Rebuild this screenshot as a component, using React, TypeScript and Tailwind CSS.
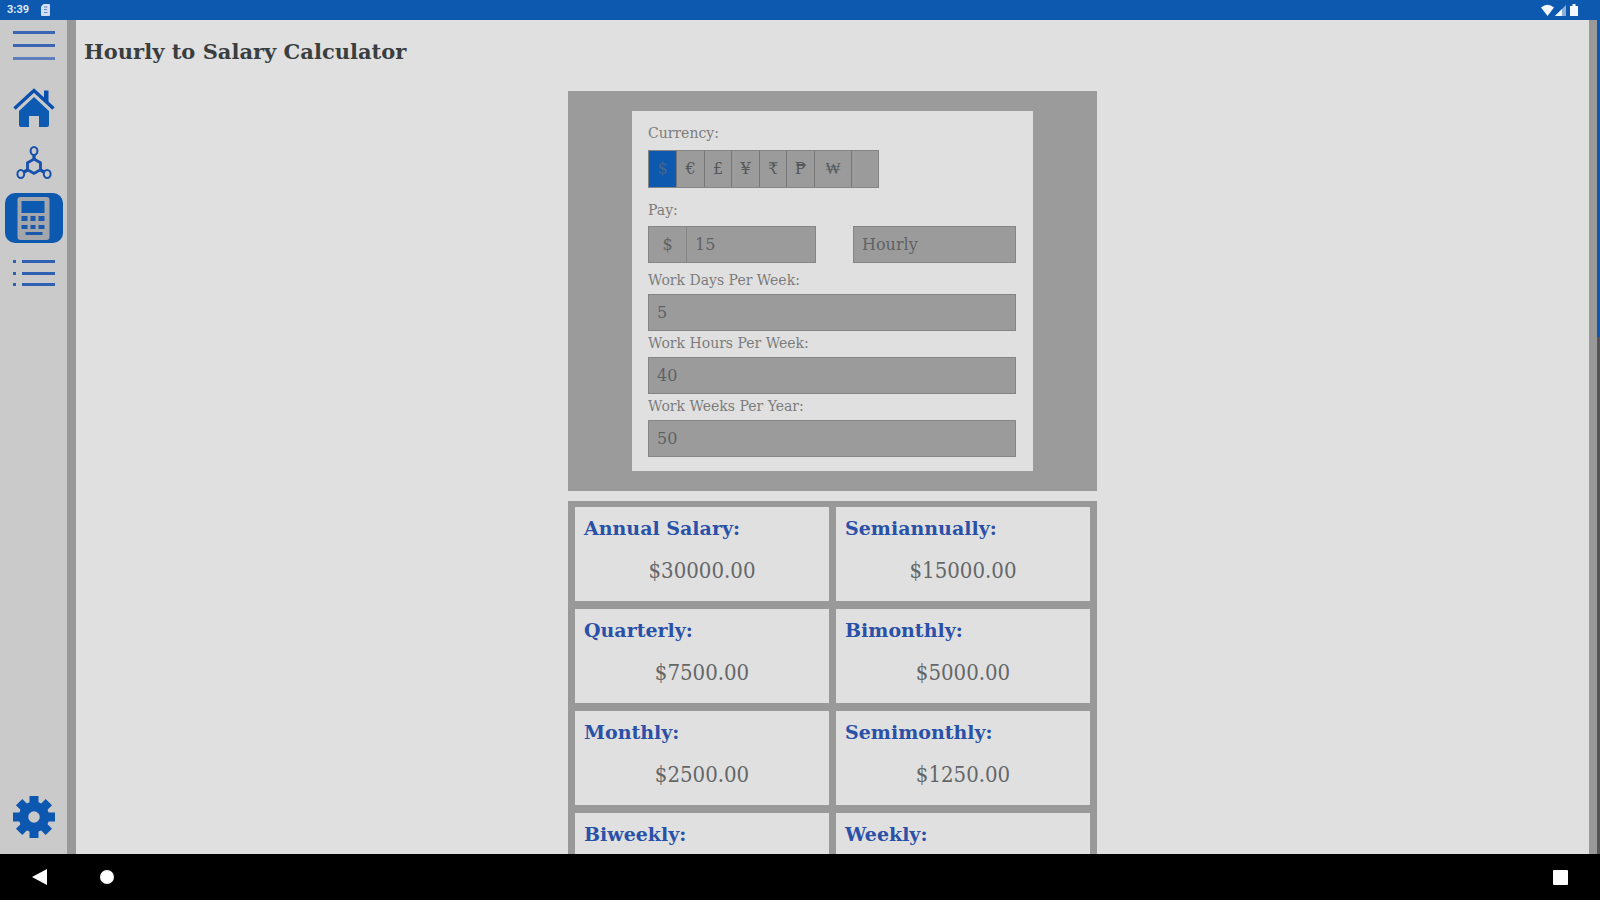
import { useState } from "react";
import type { ReactNode } from "react";

const currencies = ["$", "€", "£", "¥", "₹", "₱", "₩", ""];

const results = [
  { name: "Annual Salary:", amount: "30000.00" },
  { name: "Semiannually:", amount: "15000.00" },
  { name: "Quarterly:", amount: "7500.00" },
  { name: "Bimonthly:", amount: "5000.00" },
  { name: "Monthly:", amount: "2500.00" },
  { name: "Semimonthly:", amount: "1250.00" },
  { name: "Biweekly:" },
  { name: "Weekly:" },
];

function StatusBar() {
  return (
    <header className="flex h-5 shrink-0 items-center justify-between bg-[#0c59af] pl-[7px] pr-[21px] font-['Roboto',sans-serif] text-[11px] font-bold text-[#dfe6f5]">
      <div className="flex items-center gap-3">
        <span>3:39</span>
        <svg width="9" height="12" viewBox="0 0 9 12" aria-hidden="true">
          <path d="M2.500 0H8a1 1 0 0 1 1 1v10a1 1 0 0 1-1 1H1a1 1 0 0 1-1-1V2.500z" fill="#d3def2" />
          <path d="M3 3h3.500M3 5.500h3M3 8.500h3.500" stroke="#5d8bcb" strokeWidth="1.200" />
        </svg>
      </div>
      <svg width="38" height="13" viewBox="0 0 38 13" aria-hidden="true" fill="#f4f7fd">
        <path d="M0 3.500Q6.500-2 13 3.500L6.500 12z" />
        <path d="M14 12L25 1v11z" opacity=".55" />
        <path d="M14 12l7-7v7z" />
        <path d="M29 2h2.500V0h3v2H37v10h-8z" />
      </svg>
    </header>
  );
}

function HomeIcon() {
  return (
    <svg width="42" height="40" viewBox="0 0 42 40" aria-hidden="true">
      <path d="M1.500 20.500L21 2.500l19.500 18" fill="none" stroke="#0b4fae" strokeWidth="3.400" />
      <path d="M31 2.500h4.500V15L31 11z" fill="#0b4fae" />
      <path d="M21 9L6 23v14q0 2 2 2h8V28h10v11h8q2 0 2-2V23z" fill="#0c5ab2" />
    </svg>
  );
}

function MoleculeIcon() {
  return (
    <svg width="36" height="34" viewBox="0 0 36 34" aria-hidden="true" fill="none" stroke="#1650ad">
      <path d="M18 13l6.500 3.800v7L18 27.500l-6.500-3.700v-7z" strokeWidth="2.800" />
      <path d="M18 13V9M24.500 24l3.500 2M11.500 24L8 26" strokeWidth="3.200" />
      <ellipse cx="18" cy="5" rx="3.400" ry="4" strokeWidth="2" />
      <ellipse cx="4.800" cy="28" rx="3.400" ry="4" strokeWidth="2" />
      <ellipse cx="31.200" cy="28" rx="3.400" ry="4" strokeWidth="2" />
    </svg>
  );
}

function CalculatorIcon() {
  return (
    <svg width="33" height="43" viewBox="0 0 32 43" aria-hidden="true">
      <rect x="0" y="0" width="32" height="43" rx="3" fill="#a3a6ab" />
      <rect x="4" y="4" width="23" height="12" fill="#0c5ab2" />
      <g fill="#1a58ad">
        <rect x="4" y="19" width="6" height="5" />
        <rect x="13" y="19" width="5" height="5" />
        <rect x="21" y="19" width="6" height="5" />
        <rect x="4" y="28" width="6" height="4" />
        <rect x="13" y="28" width="5" height="4" />
        <rect x="21" y="28" width="6" height="4" />
        <rect x="8" y="35" width="17" height="3" />
      </g>
    </svg>
  );
}

function GearIcon() {
  const teeth = [0, 45, 90, 135, 180, 225, 270, 315];
  return (
    <svg width="42" height="42" viewBox="-21 -21 42 42" aria-hidden="true">
      {teeth.map((a) => (
        <path key={a} d="M-4.500-21h9v8h-9z" fill="#0c57b0" transform={`rotate(${a})`} />
      ))}
      <circle r="10.500" fill="none" stroke="#0c57b0" strokeWidth="9.500" />
    </svg>
  );
}

function NavButton({ label, active, children }: { label: string; active?: boolean; children: ReactNode }) {
  return (
    <button
      type="button"
      aria-label={label}
      className={
        active
          ? "flex h-[50px] w-[58px] items-center justify-center rounded-[10px] bg-[#0c59af]"
          : "flex h-[50px] w-[58px] items-center justify-center"
      }
    >
      {children}
    </button>
  );
}

function Sidebar() {
  return (
    <nav className="flex w-[76px] shrink-0 flex-col items-center border-r-[9px] border-[#999999] bg-[#cacaca] pb-3 pt-px">
      <NavButton label="Menu">
        <svg width="42" height="30" viewBox="0 0 42 30" aria-hidden="true" fill="#3a66b3">
          <rect y="0" width="42" height="3" />
          <rect y="13" width="42" height="3" />
          <rect y="26" width="42" height="3" opacity=".75" />
        </svg>
      </NavButton>
      <div className="mt-3 flex flex-col gap-[5px]">
        <NavButton label="Home"><HomeIcon /></NavButton>
        <NavButton label="Formulas"><MoleculeIcon /></NavButton>
        <NavButton label="Calculators" active><CalculatorIcon /></NavButton>
        <NavButton label="List">
          <svg width="42" height="26" viewBox="0 0 42 26" aria-hidden="true" fill="#2f60b2">
            <path d="M9 0h33v3H9zM9 12h33v3H9zM9 23h33v3H9zM0 0h3v3H0zM0 12h3v3H0zM0 23h3v3H0z" />
          </svg>
        </NavButton>
      </div>
      <div className="mt-auto">
        <NavButton label="Settings"><GearIcon /></NavButton>
      </div>
    </nav>
  );
}

const fieldClass =
  "h-[37px] w-full min-w-0 appearance-none rounded-none border border-[#858585] bg-[#9b9b9b] px-2 text-base text-[#5f6264] outline-none";

function NumberField({ id, label, initial }: { id: string; label: string; initial: string }) {
  const [value, setValue] = useState(initial);
  return (
    <div>
      <label htmlFor={id} className="block pb-[2px] text-sm leading-6 text-[#7c7c7c]">{label}</label>
      <input id={id} value={value} onChange={(e) => setValue(e.target.value)} className={`${fieldClass} block`} />
    </div>
  );
}

function PayForm({ symbol, onSymbol }: { symbol: string; onSymbol: (s: string) => void }) {
  const [pay, setPay] = useState("15");
  return (
    <form className="bg-[#9b9b9b] px-16 py-5 font-['DejaVu_Serif',serif]">
      <div className="bg-[#e0e0e0] pb-[14px] pl-4 pr-[17px] pt-3">
        <div className="text-sm leading-5 text-[#7c7c7c]" id="currency-label">Currency:</div>
        <div
          role="group"
          aria-labelledby="currency-label"
          className="mt-[7px] grid h-[38px] w-fit grid-cols-[27px_28px_27px_28px_27px_28px_37px_27px] border border-[#858585]"
        >
          {currencies.map((c) => (
            <button
              key={c}
              type="button"
              aria-label={c || "No symbol"}
              aria-pressed={c === symbol}
              onClick={() => onSymbol(c)}
              className={
                c === symbol
                  ? "bg-[#0c59af] text-base text-[#47658c]"
                  : "border-l border-[#777777] bg-[#9b9b9b] text-base text-[#55595b]"
              }
            >
              {c}
            </button>
          ))}
        </div>
        <label htmlFor="pay" className="mt-3 block pb-[6px] text-sm leading-5 text-[#7c7c7c]">Pay:</label>
        <div className="mb-[5px] flex justify-between">
          <div className="flex w-[168px]">
            <span className="flex w-[38px] shrink-0 items-center justify-center border border-r-0 border-[#858585] bg-[#9b9b9b] text-base text-[#5f6264]">
              {symbol}
            </span>
            <input id="pay" value={pay} onChange={(e) => setPay(e.target.value)} className={fieldClass} />
          </div>
          <div className="w-[163px]">
            <select aria-label="Pay period" className={`${fieldClass} block`}>
              <option>Hourly</option>
              <option>Weekly</option>
              <option>Monthly</option>
            </select>
          </div>
        </div>
        <NumberField id="days" label="Work Days Per Week:" initial="5" />
        <NumberField id="hours" label="Work Hours Per Week:" initial="40" />
        <NumberField id="weeks" label="Work Weeks Per Year:" initial="50" />
      </div>
    </form>
  );
}

export default function App() {
  const [symbol, setSymbol] = useState("$");
  return (
    <div className="flex h-screen flex-col overflow-hidden bg-[#e0e0e0] font-['DejaVu_Serif_Condensed','DejaVu_Serif',serif]">
      <StatusBar />
      <div className="flex min-h-0 flex-1">
        <Sidebar />
        <main className="min-w-0 flex-1 overflow-hidden">
          <h1 className="px-2 pt-4 font-['DejaVu_Serif',serif] text-[21px] font-bold leading-8 text-[#3a3e3f]">
            Hourly to Salary Calculator
          </h1>
          <div className="mx-auto mt-[23px] flex max-w-[529px] flex-col gap-[10px]">
            <PayForm symbol={symbol} onSymbol={setSymbol} />
            <dl className="grid grid-cols-2 gap-x-[7px] gap-y-2 bg-[#999999] px-[7px] py-[6px]">
              {results.map(({ name, amount }) => (
                <div key={name} className="h-[94px] bg-[#e0e0e0] px-[9px] pt-2">
                  <dt className="font-['DejaVu_Serif',serif] text-[19px] font-bold leading-[26px] text-[#2a50a8]">{name}</dt>
                  {amount && (
                    <dd className="pt-4 text-center text-[22px] leading-7 text-[#646768]">{symbol}{amount}</dd>
                  )}
                </div>
              ))}
            </dl>
          </div>
        </main>
        <div className="flex w-[11px] shrink-0 bg-[#999999] pl-2">
          <div className="w-full bg-[#555555]">
            <div className="h-[38%] bg-[#0c59af]" />
          </div>
        </div>
      </div>
      <footer className="flex h-[46px] shrink-0 items-center bg-black pl-8 pr-8">
        <button type="button" aria-label="Back">
          <svg width="16" height="16" viewBox="0 0 16 16" fill="#fff"><path d="M0 8L15 0v16z" /></svg>
        </button>
        <button type="button" aria-label="Home" className="ml-[52px]">
          <svg width="14" height="14" viewBox="0 0 14 14" fill="#fff"><circle cx="7" cy="7" r="7" /></svg>
        </button>
        <button type="button" aria-label="Recent apps" className="ml-auto">
          <svg width="15" height="15" viewBox="0 0 15 15" fill="#fff"><rect width="15" height="15" rx="1" /></svg>
        </button>
      </footer>
    </div>
  );
}
